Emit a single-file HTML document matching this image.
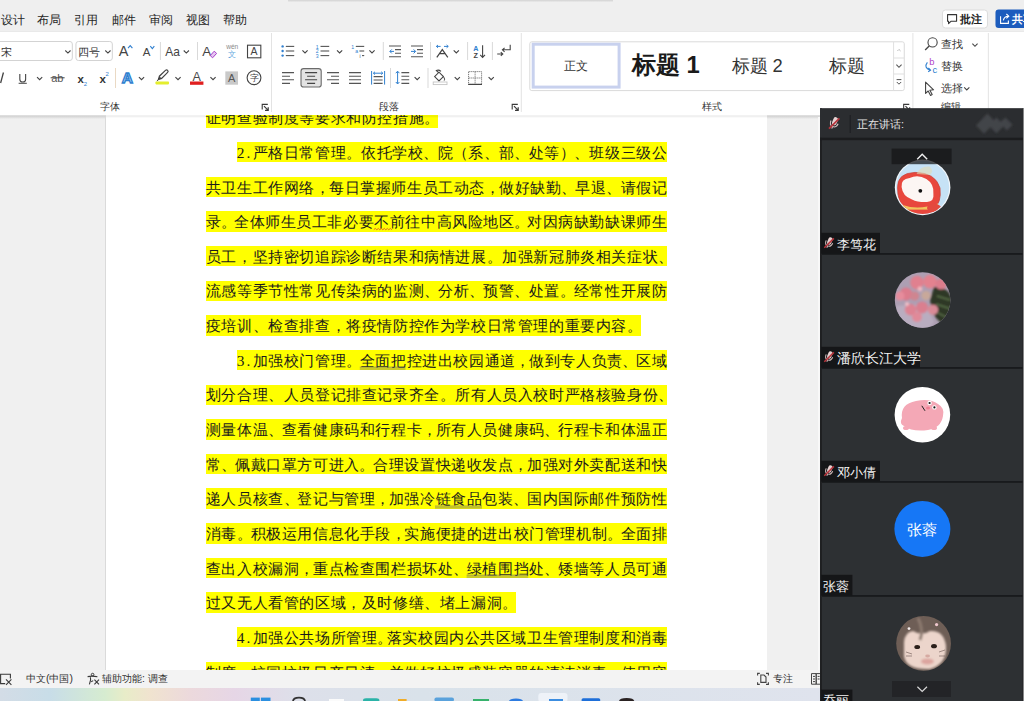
<!DOCTYPE html><html><head><meta charset="utf-8"><style>
*{margin:0;padding:0;box-sizing:border-box}
html,body{width:1024px;height:701px;overflow:hidden;background:#f0f0f0;position:relative;font-family:"Liberation Sans", sans-serif}
.a{position:absolute}
#menu{left:0;top:0;width:1024px;height:31.2px;background:#efefef}
#menu span{position:absolute;top:12.6px;font-size:16px;line-height:13px;color:#262626;white-space:nowrap}
.cjk #menu span{top:14.1px;font-size:12px}
#ribbon{left:0;top:31.2px;width:1024px;height:83.4px;background:#ffffff;border-top:1px solid #e9e9e9}
#rshadow{left:0;top:114.6px;width:1024px;height:4px;background:linear-gradient(#e2e2e2,#d6d6d6 40%,#f0f0f0)}
#page{left:105.5px;top:114.6px;width:661.5px;height:555.2px;background:#fff;overflow:hidden}
#pedge{left:105px;top:117px;width:1px;height:556px;background:#dadada}
.ln{position:absolute;height:20.4px;background:#ffff00;white-space:nowrap;font-family:"Liberation Sans", sans-serif;font-size:18px;line-height:20.4px;color:#1b1b1b;-webkit-text-stroke:0.48px #1b1b1b}
.ln i{display:inline-block;font-style:normal;text-align:center;height:20.4px;overflow:visible;vertical-align:top;position:relative;top:0.9px}
.ln i.h{font-family:"Liberation Serif", serif;font-size:15.4px;-webkit-text-stroke:0}
.ln i.p{font-size:8px;top:5px;text-align:left;text-indent:1.2px}
.cjk .ln{font-size:15.4px;-webkit-text-stroke:0}
.cjk .ln i.p{font-size:15.4px;top:0.9px;text-align:center;text-indent:0}
#status{left:0;top:669.8px;width:1024px;height:18px;background:#f3f3f3}
#status span{position:absolute;top:2.9px;font-size:13.9px;line-height:12px;color:#333;white-space:nowrap}
.cjk #status span{top:3.6px;font-size:10.4px}
svg text.z{font-size:calc(var(--f)*1.333)}
.cjk svg text.z{font-size:var(--f)}
#task{left:0;top:687.5px;width:1024px;height:14px;background:linear-gradient(90deg,#d3dce6 0px,#c8dde8 50px,#d6ecd0 105px,#e8ecc8 125px,#f0e3cf 150px,#ecd9dc 190px,#e6d6e6 235px,#dde0ea 300px,#d9e2ea 420px,#dfe3ed 820px)}
</style></head><body><script>(function(){var d=document,s=d.createElement("span");s.style.cssText="position:absolute;left:-9999px;top:0;font-size:100px;font-family:\"Liberation Sans\",sans-serif;white-space:nowrap";s.textContent="\u4e2d\u6587\u4e2d\u6587";d.body.appendChild(s);var w=s.getBoundingClientRect().width;d.body.removeChild(s);if(w>360){d.documentElement.className+=" cjk";}})();</script><div id="menu" class="a"><span style="left:0.7px">设计</span><span style="left:37.4px">布局</span><span style="left:74.4px">引用</span><span style="left:112.4px">邮件</span><span style="left:149.1px">审阅</span><span style="left:186.4px">视图</span><span style="left:223.3px">帮助</span></div><div class="a" style="left:288px;top:0;width:325px;height:2.4px;background:linear-gradient(#d8d8d8 45%,#efefef)"></div><div id="ribbon" class="a"></div><svg class="a" style="left:0;top:0" width="1024" height="114.6" viewBox="0 0 1024 114.6"><g stroke-linecap="butt"><rect x="-3" y="41.5" width="75.3" height="19" rx="2.5" fill="#fff" stroke="#d3d3d3"/><text x="0.5" y="55.6" font-size="11.5" fill="#333" font-weight="normal" text-anchor="start" font-family='"Liberation Sans", sans-serif' class="z" style="--f:11.50px">宋</text><path d="M65.3 50.5L67.9 53.1L70.5 50.5" stroke="#444" stroke-width="1.1" fill="none"/><rect x="75.9" y="41.5" width="36.4" height="19" rx="2.5" fill="#fff" stroke="#d3d3d3"/><text x="77.6" y="55.6" font-size="11.5" fill="#333" font-weight="normal" text-anchor="start" font-family='"Liberation Sans", sans-serif' class="z" style="--f:11.50px">四号</text><path d="M105.3 50.5L107.9 53.1L110.5 50.5" stroke="#444" stroke-width="1.1" fill="none"/><text x="118.8" y="56.0" font-size="14.5" fill="#444" font-weight="normal" text-anchor="start" font-family='"Liberation Sans", sans-serif' >A</text><path d="M128 48.2L130.2 45.6L132.4 48.2" stroke="#2f7fcf" stroke-width="1.1" fill="none"/><text x="142.8" y="56.2" font-size="11.5" fill="#444" font-weight="normal" text-anchor="start" font-family='"Liberation Sans", sans-serif' >A</text><path d="M150.3 46.2L152.3 48.6L154.3 46.2" stroke="#2f7fcf" stroke-width="1.1" fill="none"/><path d="M160.4 42.0V60.0" stroke="#d9d9d9" stroke-width="1"/><text x="165.3" y="56.2" font-size="12.0" fill="#444" font-weight="normal" text-anchor="start" font-family='"Liberation Sans", sans-serif' >Aa</text><path d="M183.7 50.5L186.3 53.1L188.9 50.5" stroke="#444" stroke-width="1.1" fill="none"/><path d="M197.5 42.0V60.0" stroke="#d9d9d9" stroke-width="1"/><text x="202.2" y="56.0" font-size="13.5" fill="#444" font-weight="normal" text-anchor="start" font-family='"Liberation Sans", sans-serif' >A</text><path d="M210.2 55.6L214.2 51.2L216.6 53.4L212.6 57.8Z" fill="#e6c6f2" stroke="#a63fc8" stroke-width="1"/><text x="232.2" y="49.4" font-size="6.6" fill="#8a8a8a" font-weight="normal" text-anchor="middle" font-family='"Liberation Sans", sans-serif' >wén</text><text x="232.4" y="57.2" font-size="8.0" fill="#62a8de" font-weight="normal" text-anchor="middle" font-family='"Liberation Sans", sans-serif' class="z" style="--f:8.00px">文</text><rect x="247.5" y="45.2" width="13.3" height="12.6" fill="none" stroke="#444" stroke-width="1.1"/><text x="254.1" y="55.4" font-size="10.5" fill="#444" font-weight="normal" text-anchor="middle" font-family='"Liberation Sans", sans-serif' >A</text><path d="M0.6 83L3.4 72.5" stroke="#444" stroke-width="1.3"/><path d="M19.8 74V79.2Q19.8 82 22.7 82Q25.6 82 25.6 79.2V74" stroke="#444" stroke-width="1.1" fill="none"/><path d="M18.6 83.3H26.8" stroke="#444" stroke-width="1"/><path d="M37.0 77.1L39.6 79.7L42.2 77.1" stroke="#444" stroke-width="1.1" fill="none"/><text x="51.2" y="81.6" font-size="11.0" fill="#555" font-weight="normal" text-anchor="start" font-family='"Liberation Sans", sans-serif' >ab</text><path d="M50.6 77.8H64.6" stroke="#444" stroke-width="1"/><text x="77.4" y="82.6" font-size="11.5" fill="#333" font-weight="bold" text-anchor="start" font-family='"Liberation Sans", sans-serif' >x</text><text x="83.8" y="85.6" font-size="6.0" fill="#2f7fcf" font-weight="normal" text-anchor="start" font-family='"Liberation Sans", sans-serif' >2</text><text x="99.4" y="82.6" font-size="11.5" fill="#333" font-weight="bold" text-anchor="start" font-family='"Liberation Sans", sans-serif' >x</text><text x="105.6" y="75.6" font-size="6.0" fill="#2f7fcf" font-weight="normal" text-anchor="start" font-family='"Liberation Sans", sans-serif' >2</text><path d="M115.5 68.0V88.0" stroke="#ead9c4" stroke-width="1"/><text x="127.3" y="83.2" font-size="15.5" fill="#c4e2fb" font-weight="bold" text-anchor="middle" font-family='"Liberation Sans", sans-serif' stroke="#2f7fcf" stroke-width="1.35">A</text><path d="M138.9 77.1L141.5 79.7L144.1 77.1" stroke="#444" stroke-width="1.1" fill="none"/><path d="M158.4 79.6L159.4 76.2L165.4 70.4Q166.6 69.4 167.6 70.4Q168.6 71.4 167.6 72.4L161.6 78.4Z" stroke="#444" stroke-width="1.2" fill="#fff"/><path d="M159.4 76.2L161.6 78.4L158.4 79.6Z" fill="#444"/><path d="M158.4 79.6L156.8 81" stroke="#444" stroke-width="1"/><rect x="155.4" y="81.6" width="13.6" height="2.8" rx="0.8" fill="#e4ee2e"/><path d="M175.4 77.1L178.0 79.7L180.6 77.1" stroke="#444" stroke-width="1.1" fill="none"/><text x="196.7" y="80.6" font-size="12.6" fill="#4a4a4a" font-weight="normal" text-anchor="middle" font-family='"Liberation Sans", sans-serif' >A</text><rect x="190" y="81.5" width="13.4" height="3.3" fill="#e01f1f"/><path d="M210.4 77.1L213.0 79.7L215.6 77.1" stroke="#444" stroke-width="1.1" fill="none"/><rect x="225.3" y="71.4" width="12.7" height="13.3" fill="#c9c9c9"/><text x="231.7" y="82.4" font-size="11.0" fill="#555" font-weight="normal" text-anchor="middle" font-family='"Liberation Sans", sans-serif' >A</text><circle cx="254" cy="77.7" r="6.9" fill="none" stroke="#444" stroke-width="1.1"/><text x="254.0" y="81.2" font-size="9.0" fill="#444" font-weight="normal" text-anchor="middle" font-family='"Liberation Sans", sans-serif' class="z" style="--f:9.00px">字</text><text x="99.6" y="110.4" font-size="9.8" fill="#333" font-weight="normal" text-anchor="start" font-family='"Liberation Sans", sans-serif' class="z" style="--f:9.80px">字体</text><path d="M262.2 109.6V104.4H267.8" fill="none" stroke="#3a3a3a" stroke-width="1.1"/><path d="M264.0 106.2L268.2 110.4M268.2 107.2V110.4H265.0" fill="none" stroke="#3a3a3a" stroke-width="1.2"/><path d="M271.5 33.0V112.0" stroke="#e3e3e3" stroke-width="1"/><circle cx="282.6" cy="46.4" r="1.2" fill="#2f7fcf"/><path d="M285.8 46.4H294.2" stroke="#555" stroke-width="1.1"/><circle cx="282.6" cy="51.0" r="1.2" fill="#2f7fcf"/><path d="M285.8 51.0H294.2" stroke="#555" stroke-width="1.1"/><circle cx="282.6" cy="55.6" r="1.2" fill="#2f7fcf"/><path d="M285.8 55.6H294.2" stroke="#555" stroke-width="1.1"/><path d="M302.4 50.3L305.0 52.9L307.6 50.3" stroke="#444" stroke-width="1.1" fill="none"/><text x="317.3" y="48.6" font-size="5.2" fill="#2f7fcf" font-weight="normal" text-anchor="middle" font-family='"Liberation Sans", sans-serif' >1</text><path d="M320.5 46.4H329.2" stroke="#555" stroke-width="1.1"/><text x="317.3" y="53.2" font-size="5.2" fill="#2f7fcf" font-weight="normal" text-anchor="middle" font-family='"Liberation Sans", sans-serif' >2</text><path d="M320.5 51.0H329.2" stroke="#555" stroke-width="1.1"/><text x="317.3" y="57.8" font-size="5.2" fill="#2f7fcf" font-weight="normal" text-anchor="middle" font-family='"Liberation Sans", sans-serif' >3</text><path d="M320.5 55.6H329.2" stroke="#555" stroke-width="1.1"/><path d="M337.0 50.3L339.6 52.9L342.2 50.3" stroke="#444" stroke-width="1.1" fill="none"/><text x="352.8" y="48.6" font-size="5.2" fill="#2f7fcf" font-weight="normal" text-anchor="middle" font-family='"Liberation Sans", sans-serif' >1</text><path d="M355.8 46.4H364.2" stroke="#555" stroke-width="1.1"/><text x="356.6" y="53.2" font-size="5.2" fill="#2f7fcf" font-weight="normal" text-anchor="middle" font-family='"Liberation Sans", sans-serif' >a</text><path d="M359.4 51H364.2" stroke="#555" stroke-width="1.1"/><text x="360.2" y="57.8" font-size="5.2" fill="#555" font-weight="normal" text-anchor="middle" font-family='"Liberation Sans", sans-serif' >i</text><path d="M362 55.6H364.2" stroke="#555" stroke-width="1.1"/><path d="M369.4 50.3L372.0 52.9L374.6 50.3" stroke="#444" stroke-width="1.1" fill="none"/><path d="M383.3 42.0V60.0" stroke="#d9d9d9" stroke-width="1"/><path d="M389 46H401M395 49.6H401M395 53.2H401M389 56.8H401" stroke="#555" stroke-width="1.1"/><path d="M390 51.4H394M391.8 49.4L389.8 51.4L391.8 53.4" stroke="#2f7fcf" stroke-width="1" fill="none"/><path d="M411 46H423M417 49.6H423M417 53.2H423M411 56.8H423" stroke="#555" stroke-width="1.1"/><path d="M411 51.4H415.5M413.6 49.4L415.6 51.4L413.6 53.4" stroke="#2f7fcf" stroke-width="1" fill="none"/><path d="M430.5 42.0V60.0" stroke="#d9d9d9" stroke-width="1"/><path d="M436.8 57.4L442.3 49.6L447.8 57.4M439.6 53.6H445" stroke="#444" stroke-width="1.2" fill="none"/><path d="M436.4 46.4H440.6M438 45L436.4 46.4L438 47.8M444 46.4H448.2M446.6 45L448.2 46.4L446.6 47.8" stroke="#2f7fcf" stroke-width="1" fill="none"/><path d="M453.7 50.3L456.3 52.9L458.9 50.3" stroke="#444" stroke-width="1.1" fill="none"/><path d="M467.6 42.0V60.0" stroke="#d9d9d9" stroke-width="1"/><text x="475.8" y="51.2" font-size="7.2" fill="#2f7fcf" font-weight="bold" text-anchor="middle" font-family='"Liberation Sans", sans-serif' >A</text><text x="475.8" y="58.0" font-size="7.2" fill="#444" font-weight="bold" text-anchor="middle" font-family='"Liberation Sans", sans-serif' >Z</text><path d="M482.6 45.2V57.4M480.2 54.8L482.6 57.4L485 54.8" stroke="#444" stroke-width="1.1" fill="none"/><path d="M492.4 42.0V60.0" stroke="#d9d9d9" stroke-width="1"/><path d="M510.2 44.8V49.8H502.6M504.6 47.8L502.4 49.8L504.6 51.8" stroke="#444" stroke-width="1.1" fill="none"/><path d="M497.2 54H502.6M500.8 52.2L502.8 54L500.8 55.8" stroke="#444" stroke-width="1.1" fill="none"/><path d="M282 72.6H294M282 76.2H290M282 79.8H294M282 83.4H290" stroke="#555" stroke-width="1.1"/><rect x="301" y="68.6" width="20.2" height="18.4" rx="2.6" fill="#e3e3e3" stroke="#6b6b6b" stroke-width="1.1"/><path d="M305.1 72.6H317.1M307.1 76.2H315.1M305.1 79.8H317.1M307.1 83.4H315.1" stroke="#444" stroke-width="1.1"/><path d="M327 72.6H339M331 76.2H339M327 79.8H339M331 83.4H339" stroke="#555" stroke-width="1.1"/><path d="M349 72.6H361M349 76.2H361M349 79.8H361M349 83.4H361" stroke="#555" stroke-width="1.1"/><path d="M371.6 71V84.6M384.6 71V84.6M373.4 73.2H382.8M375 71.8L373.4 73.2L375 74.6M381.2 71.8L382.8 73.2L381.2 74.6" stroke="#2f7fcf" stroke-width="1" fill="none"/><path d="M373.6 76.6H382.6M373.6 80H382.6M373.6 83.4H382.6" stroke="#555" stroke-width="1.1"/><path d="M390.5 68.0V88.0" stroke="#d9d9d9" stroke-width="1"/><path d="M397.6 71.4V83.8M395.8 73.2L397.6 71.2L399.4 73.2M395.8 82L397.6 84L399.4 82" stroke="#2f7fcf" stroke-width="1" fill="none"/><path d="M401.4 72.6H409.2M401.4 76.2H409.2M401.4 79.8H409.2M401.4 83.4H409.2" stroke="#555" stroke-width="1.1"/><path d="M414.6 77.1L417.2 79.7L419.8 77.1" stroke="#444" stroke-width="1.1" fill="none"/><path d="M428.0 68.0V88.0" stroke="#d9d9d9" stroke-width="1"/><path d="M434.6 76.6L439 72.2L443.4 76.6L439 81Z M438.6 72.6L436.4 70.6Q438.6 69.4 441 71.4" stroke="#444" stroke-width="1.1" fill="none"/><path d="M443.6 76.8Q445.4 79.6 444.2 80.6" stroke="#444" stroke-width="1" fill="none"/><rect x="433.2" y="82" width="13.8" height="2.6" fill="#fff" stroke="#c4c4c4" stroke-width="0.9"/><path d="M454.7 77.1L457.3 79.7L459.9 77.1" stroke="#444" stroke-width="1.1" fill="none"/><path d="M468.6 71.6H481.6V84.4H468.6Z M475.1 71.6V84.4M468.6 78H481.6" stroke="#777" stroke-width="1" fill="none" stroke-dasharray="1.2 0.8"/><path d="M468.2 84.4H482" stroke="#444" stroke-width="1.2"/><path d="M488.6 77.1L491.2 79.7L493.8 77.1" stroke="#444" stroke-width="1.1" fill="none"/><text x="379.3" y="110.4" font-size="9.8" fill="#333" font-weight="normal" text-anchor="start" font-family='"Liberation Sans", sans-serif' class="z" style="--f:9.80px">段落</text><path d="M512.2 109.6V104.4H517.8" fill="none" stroke="#3a3a3a" stroke-width="1.1"/><path d="M514.0 106.2L518.2 110.4M518.2 107.2V110.4H515.0" fill="none" stroke="#3a3a3a" stroke-width="1.2"/><path d="M521.3 33.0V112.0" stroke="#e3e3e3" stroke-width="1"/><rect x="529.8" y="41.8" width="374.5" height="48.8" rx="2" fill="#fff" stroke="#dadada"/><rect x="533.2" y="44.2" width="85.9" height="42.9" fill="#fff" stroke="#c8d1ee" stroke-width="3"/><text x="576.0" y="70.4" font-size="12.0" fill="#333" font-weight="normal" text-anchor="middle" font-family='"Liberation Sans", sans-serif' class="z" style="--f:12.00px">正文</text><text x="631.6" y="73.2" font-size="23.8" fill="#1a1a1a" font-weight="bold" text-anchor="start" font-family='"Liberation Sans", sans-serif' class="z" style="--f:23.80px">标题</text><text x="686.6" y="73.2" font-size="23.8" fill="#1a1a1a" font-weight="bold" text-anchor="start" font-family='"Liberation Sans", sans-serif' >1</text><text x="731.8" y="72.4" font-size="18.4" fill="#333" font-weight="normal" text-anchor="start" font-family='"Liberation Sans", sans-serif' class="z" style="--f:18.40px">标题</text><text x="772.6" y="72.4" font-size="18.4" fill="#333" font-weight="normal" text-anchor="start" font-family='"Liberation Sans", sans-serif' >2</text><text x="828.8" y="72.4" font-size="17.8" fill="#333" font-weight="normal" text-anchor="start" font-family='"Liberation Sans", sans-serif' class="z" style="--f:17.80px">标题</text><path d="M893.6 42V90.4M893.6 58H904.2M893.6 74H904.2" stroke="#e0e0e0" stroke-width="1"/><path d="M897.4 51L899 49.4L900.6 51" stroke="#bbb" stroke-width="1" fill="none"/><path d="M896.4 64.7L899.0 67.3L901.6 64.7" stroke="#555" stroke-width="1.1" fill="none"/><path d="M896.6 79.6H901.4M896.8 82L899 84.2L901.2 82" stroke="#555" stroke-width="1" fill="none"/><text x="702.0" y="110.4" font-size="9.8" fill="#333" font-weight="normal" text-anchor="start" font-family='"Liberation Sans", sans-serif' class="z" style="--f:9.80px">样式</text><path d="M903.7 109.6V104.4H909.3" fill="none" stroke="#3a3a3a" stroke-width="1.1"/><path d="M905.5 106.2L909.7 110.4M909.7 107.2V110.4H906.5" fill="none" stroke="#3a3a3a" stroke-width="1.2"/><path d="M912.9 33.0V112.0" stroke="#e3e3e3" stroke-width="1"/><circle cx="932.6" cy="42.4" r="4.6" fill="none" stroke="#444" stroke-width="1.1"/><path d="M929.4 45.8L925.2 50" stroke="#444" stroke-width="1.3"/><text x="941.0" y="48.4" font-size="10.6" fill="#333" font-weight="normal" text-anchor="start" font-family='"Liberation Sans", sans-serif' class="z" style="--f:10.60px">查找</text><path d="M972.4 43.7L975.0 46.3L977.6 43.7" stroke="#444" stroke-width="1.1" fill="none"/><text x="929.2" y="65.4" font-size="9.4" fill="#b044c8" font-weight="normal" text-anchor="start" font-family='"Liberation Sans", sans-serif' >b</text><text x="932.6" y="73.4" font-size="9.4" fill="#2f7fcf" font-weight="normal" text-anchor="start" font-family='"Liberation Sans", sans-serif' >c</text><path d="M927.4 62.4Q923.4 67.6 930.2 70.2M928.4 68L930.6 70.2L928.2 71.8" stroke="#2f7fcf" stroke-width="1.1" fill="none"/><text x="941.0" y="70.4" font-size="10.6" fill="#333" font-weight="normal" text-anchor="start" font-family='"Liberation Sans", sans-serif' class="z" style="--f:10.60px">替换</text><path d="M925.6 82.2V93.4L928.2 91L930.6 95.4L932.2 94.6L929.9 90.2L933.6 89.8Z" fill="none" stroke="#444" stroke-width="1.1" stroke-linejoin="round"/><text x="941.0" y="92.4" font-size="10.6" fill="#333" font-weight="normal" text-anchor="start" font-family='"Liberation Sans", sans-serif' class="z" style="--f:10.60px">选择</text><path d="M964.2 87.3L966.8 89.9L969.4 87.3" stroke="#444" stroke-width="1.1" fill="none"/><text x="941.0" y="109.8" font-size="10.2" fill="#333" font-weight="normal" text-anchor="start" font-family='"Liberation Sans", sans-serif' class="z" style="--f:10.20px">编辑</text><path d="M988.4 33.0V112.0" stroke="#e3e3e3" stroke-width="1"/><rect x="942.5" y="10" width="45" height="18" rx="3" fill="#fff" stroke="#dcdcdc"/><path d="M947.6 14.6H956.6V21.2H951.2L948.6 23.6V21.2H947.6Z" fill="none" stroke="#333" stroke-width="1.1" stroke-linejoin="round"/><text x="960.0" y="23.2" font-size="11.2" fill="#222" font-weight="bold" text-anchor="start" font-family='"Liberation Sans", sans-serif' class="z" style="--f:11.20px">批注</text><rect x="995.5" y="9.6" width="40" height="18.4" rx="3.2" fill="#1c5cbd"/><path d="M1000.6 16.2V23.4H1008.4V20.6M1003.4 20.4Q1004 16.4 1008.4 16.2M1006.4 14L1008.8 16.2L1006.4 18.4" fill="none" stroke="#fff" stroke-width="1.1"/><text x="1011.8" y="23.2" font-size="11.2" fill="#fff" font-weight="bold" text-anchor="start" font-family='"Liberation Sans", sans-serif' class="z" style="--f:11.20px">共享</text></g></svg><div id="rshadow" class="a"></div><div id="page" class="a"><div class="ln" style="left:100.10px;top:-7.25px;width:232.90px"><i style="width:15.600px">证</i><i style="width:15.600px">明</i><i style="width:15.600px">查</i><i style="width:15.600px">验</i><i style="width:15.600px">制</i><i style="width:15.600px">度</i><i style="width:15.600px">等</i><i style="width:15.600px">要</i><i style="width:15.600px">求</i><i style="width:15.600px">和</i><i style="width:15.600px">防</i><i style="width:15.600px">控</i><i style="width:15.600px">措</i><i style="width:15.600px">施</i><i class="p" style="width:14.500px">。</i></div><div class="ln" style="left:131.30px;top:27.40px;width:430.50px"><i class="h" style="width:7.800px">2</i><i class="h" style="width:7.800px">.</i><i style="width:15.600px">严</i><i style="width:15.600px">格</i><i style="width:15.600px">日</i><i style="width:15.600px">常</i><i style="width:15.600px">管</i><i style="width:15.600px">理</i><i class="p" style="width:14.700px">。</i><i style="width:15.600px">依</i><i style="width:15.600px">托</i><i style="width:15.600px">学</i><i style="width:15.600px">校</i><i class="p" style="width:14.700px">、</i><i style="width:15.600px">院</i><i class="p" style="width:14.700px">（</i><i style="width:15.600px">系</i><i class="p" style="width:14.700px">、</i><i style="width:15.600px">部</i><i class="p" style="width:14.700px">、</i><i style="width:15.600px">处</i><i style="width:15.600px">等</i><i class="p" style="width:14.700px">）</i><i class="p" style="width:14.700px">、</i><i style="width:15.600px">班</i><i style="width:15.600px">级</i><i style="width:15.600px">三</i><i style="width:15.600px">级</i><i style="width:15.600px">公</i></div><div class="ln" style="left:100.10px;top:62.05px;width:461.70px"><i style="width:15.600px">共</i><i style="width:15.600px">卫</i><i style="width:15.600px">生</i><i style="width:15.600px">工</i><i style="width:15.600px">作</i><i style="width:15.600px">网</i><i style="width:15.600px">络</i><i class="p" style="width:14.025px">，</i><i style="width:15.600px">每</i><i style="width:15.600px">日</i><i style="width:15.600px">掌</i><i style="width:15.600px">握</i><i style="width:15.600px">师</i><i style="width:15.600px">生</i><i style="width:15.600px">员</i><i style="width:15.600px">工</i><i style="width:15.600px">动</i><i style="width:15.600px">态</i><i class="p" style="width:14.025px">，</i><i style="width:15.600px">做</i><i style="width:15.600px">好</i><i style="width:15.600px">缺</i><i style="width:15.600px">勤</i><i class="p" style="width:14.025px">、</i><i style="width:15.600px">早</i><i style="width:15.600px">退</i><i class="p" style="width:14.025px">、</i><i style="width:15.600px">请</i><i style="width:15.600px">假</i><i style="width:15.600px">记</i></div><div class="ln" style="left:100.10px;top:96.70px;width:461.70px"><i style="width:15.600px">录</i><i class="p" style="width:12.450px">。</i><i style="width:15.600px">全</i><i style="width:15.600px">体</i><i style="width:15.600px">师</i><i style="width:15.600px">生</i><i style="width:15.600px">员</i><i style="width:15.600px">工</i><i style="width:15.600px">非</i><i style="width:15.600px">必</i><i style="width:15.600px">要</i><i style="width:15.600px">不</i><i style="width:15.600px">前</i><i style="width:15.600px">往</i><i style="width:15.600px">中</i><i style="width:15.600px">高</i><i style="width:15.600px">风</i><i style="width:15.600px">险</i><i style="width:15.600px">地</i><i style="width:15.600px">区</i><i class="p" style="width:12.450px">。</i><i style="width:15.600px">对</i><i style="width:15.600px">因</i><i style="width:15.600px">病</i><i style="width:15.600px">缺</i><i style="width:15.600px">勤</i><i style="width:15.600px">缺</i><i style="width:15.600px">课</i><i style="width:15.600px">师</i><i style="width:15.600px">生</i></div><div class="ln" style="left:100.10px;top:131.35px;width:461.70px"><i style="width:15.600px">员</i><i style="width:15.600px">工</i><i class="p" style="width:15.600px">，</i><i style="width:15.600px">坚</i><i style="width:15.600px">持</i><i style="width:15.600px">密</i><i style="width:15.600px">切</i><i style="width:15.600px">追</i><i style="width:15.600px">踪</i><i style="width:15.600px">诊</i><i style="width:15.600px">断</i><i style="width:15.600px">结</i><i style="width:15.600px">果</i><i style="width:15.600px">和</i><i style="width:15.600px">病</i><i style="width:15.600px">情</i><i style="width:15.600px">进</i><i style="width:15.600px">展</i><i class="p" style="width:15.600px">。</i><i style="width:15.600px">加</i><i style="width:15.600px">强</i><i style="width:15.600px">新</i><i style="width:15.600px">冠</i><i style="width:15.600px">肺</i><i style="width:15.600px">炎</i><i style="width:15.600px">相</i><i style="width:15.600px">关</i><i style="width:15.600px">症</i><i style="width:15.600px">状</i><i class="p" style="width:9.300px">、</i></div><div class="ln" style="left:100.10px;top:166.00px;width:461.70px"><i style="width:15.600px">流</i><i style="width:15.600px">感</i><i style="width:15.600px">等</i><i style="width:15.600px">季</i><i style="width:15.600px">节</i><i style="width:15.600px">性</i><i style="width:15.600px">常</i><i style="width:15.600px">见</i><i style="width:15.600px">传</i><i style="width:15.600px">染</i><i style="width:15.600px">病</i><i style="width:15.600px">的</i><i style="width:15.600px">监</i><i style="width:15.600px">测</i><i class="p" style="width:14.025px">、</i><i style="width:15.600px">分</i><i style="width:15.600px">析</i><i class="p" style="width:14.025px">、</i><i style="width:15.600px">预</i><i style="width:15.600px">警</i><i class="p" style="width:14.025px">、</i><i style="width:15.600px">处</i><i style="width:15.600px">置</i><i class="p" style="width:14.025px">。</i><i style="width:15.600px">经</i><i style="width:15.600px">常</i><i style="width:15.600px">性</i><i style="width:15.600px">开</i><i style="width:15.600px">展</i><i style="width:15.600px">防</i></div><div class="ln" style="left:100.10px;top:200.65px;width:435.70px"><i style="width:15.600px">疫</i><i style="width:15.600px">培</i><i style="width:15.600px">训</i><i class="p" style="width:15.600px">、</i><i style="width:15.600px">检</i><i style="width:15.600px">查</i><i style="width:15.600px">排</i><i style="width:15.600px">查</i><i class="p" style="width:15.600px">，</i><i style="width:15.600px">将</i><i style="width:15.600px">疫</i><i style="width:15.600px">情</i><i style="width:15.600px">防</i><i style="width:15.600px">控</i><i style="width:15.600px">作</i><i style="width:15.600px">为</i><i style="width:15.600px">学</i><i style="width:15.600px">校</i><i style="width:15.600px">日</i><i style="width:15.600px">常</i><i style="width:15.600px">管</i><i style="width:15.600px">理</i><i style="width:15.600px">的</i><i style="width:15.600px">重</i><i style="width:15.600px">要</i><i style="width:15.600px">内</i><i style="width:15.600px">容</i><i class="p" style="width:14.500px">。</i></div><div class="ln" style="left:131.30px;top:235.30px;width:430.50px"><i class="h" style="width:7.800px">3</i><i class="h" style="width:7.800px">.</i><i style="width:15.600px">加</i><i style="width:15.600px">强</i><i style="width:15.600px">校</i><i style="width:15.600px">门</i><i style="width:15.600px">管</i><i style="width:15.600px">理</i><i class="p" style="width:13.500px">。</i><i style="width:15.600px">全</i><i style="width:15.600px">面</i><i style="width:15.600px">把</i><i style="width:15.600px">控</i><i style="width:15.600px">进</i><i style="width:15.600px">出</i><i style="width:15.600px">校</i><i style="width:15.600px">园</i><i style="width:15.600px">通</i><i style="width:15.600px">道</i><i class="p" style="width:13.500px">，</i><i style="width:15.600px">做</i><i style="width:15.600px">到</i><i style="width:15.600px">专</i><i style="width:15.600px">人</i><i style="width:15.600px">负</i><i style="width:15.600px">责</i><i class="p" style="width:13.500px">、</i><i style="width:15.600px">区</i><i style="width:15.600px">域</i></div><div class="ln" style="left:100.10px;top:269.95px;width:461.70px"><i style="width:15.600px">划</i><i style="width:15.600px">分</i><i style="width:15.600px">合</i><i style="width:15.600px">理</i><i class="p" style="width:15.600px">、</i><i style="width:15.600px">人</i><i style="width:15.600px">员</i><i style="width:15.600px">登</i><i style="width:15.600px">记</i><i style="width:15.600px">排</i><i style="width:15.600px">查</i><i style="width:15.600px">记</i><i style="width:15.600px">录</i><i style="width:15.600px">齐</i><i style="width:15.600px">全</i><i class="p" style="width:15.600px">。</i><i style="width:15.600px">所</i><i style="width:15.600px">有</i><i style="width:15.600px">人</i><i style="width:15.600px">员</i><i style="width:15.600px">入</i><i style="width:15.600px">校</i><i style="width:15.600px">时</i><i style="width:15.600px">严</i><i style="width:15.600px">格</i><i style="width:15.600px">核</i><i style="width:15.600px">验</i><i style="width:15.600px">身</i><i style="width:15.600px">份</i><i class="p" style="width:9.300px">、</i></div><div class="ln" style="left:100.10px;top:304.60px;width:461.70px"><i style="width:15.600px">测</i><i style="width:15.600px">量</i><i style="width:15.600px">体</i><i style="width:15.600px">温</i><i class="p" style="width:13.500px">、</i><i style="width:15.600px">查</i><i style="width:15.600px">看</i><i style="width:15.600px">健</i><i style="width:15.600px">康</i><i style="width:15.600px">码</i><i style="width:15.600px">和</i><i style="width:15.600px">行</i><i style="width:15.600px">程</i><i style="width:15.600px">卡</i><i class="p" style="width:13.500px">，</i><i style="width:15.600px">所</i><i style="width:15.600px">有</i><i style="width:15.600px">人</i><i style="width:15.600px">员</i><i style="width:15.600px">健</i><i style="width:15.600px">康</i><i style="width:15.600px">码</i><i class="p" style="width:13.500px">、</i><i style="width:15.600px">行</i><i style="width:15.600px">程</i><i style="width:15.600px">卡</i><i style="width:15.600px">和</i><i style="width:15.600px">体</i><i style="width:15.600px">温</i><i style="width:15.600px">正</i></div><div class="ln" style="left:100.10px;top:339.25px;width:461.70px"><i style="width:15.600px">常</i><i class="p" style="width:13.500px">、</i><i style="width:15.600px">佩</i><i style="width:15.600px">戴</i><i style="width:15.600px">口</i><i style="width:15.600px">罩</i><i style="width:15.600px">方</i><i style="width:15.600px">可</i><i style="width:15.600px">进</i><i style="width:15.600px">入</i><i class="p" style="width:13.500px">。</i><i style="width:15.600px">合</i><i style="width:15.600px">理</i><i style="width:15.600px">设</i><i style="width:15.600px">置</i><i style="width:15.600px">快</i><i style="width:15.600px">递</i><i style="width:15.600px">收</i><i style="width:15.600px">发</i><i style="width:15.600px">点</i><i class="p" style="width:13.500px">，</i><i style="width:15.600px">加</i><i style="width:15.600px">强</i><i style="width:15.600px">对</i><i style="width:15.600px">外</i><i style="width:15.600px">卖</i><i style="width:15.600px">配</i><i style="width:15.600px">送</i><i style="width:15.600px">和</i><i style="width:15.600px">快</i></div><div class="ln" style="left:100.10px;top:373.90px;width:461.70px"><i style="width:15.600px">递</i><i style="width:15.600px">人</i><i style="width:15.600px">员</i><i style="width:15.600px">核</i><i style="width:15.600px">查</i><i class="p" style="width:13.500px">、</i><i style="width:15.600px">登</i><i style="width:15.600px">记</i><i style="width:15.600px">与</i><i style="width:15.600px">管</i><i style="width:15.600px">理</i><i class="p" style="width:13.500px">，</i><i style="width:15.600px">加</i><i style="width:15.600px">强</i><i style="width:15.600px">冷</i><i style="width:15.600px">链</i><i style="width:15.600px">食</i><i style="width:15.600px">品</i><i style="width:15.600px">包</i><i style="width:15.600px">装</i><i class="p" style="width:13.500px">、</i><i style="width:15.600px">国</i><i style="width:15.600px">内</i><i style="width:15.600px">国</i><i style="width:15.600px">际</i><i style="width:15.600px">邮</i><i style="width:15.600px">件</i><i style="width:15.600px">预</i><i style="width:15.600px">防</i><i style="width:15.600px">性</i></div><div class="ln" style="left:100.10px;top:408.55px;width:461.70px"><i style="width:15.600px">消</i><i style="width:15.600px">毒</i><i class="p" style="width:13.500px">。</i><i style="width:15.600px">积</i><i style="width:15.600px">极</i><i style="width:15.600px">运</i><i style="width:15.600px">用</i><i style="width:15.600px">信</i><i style="width:15.600px">息</i><i style="width:15.600px">化</i><i style="width:15.600px">手</i><i style="width:15.600px">段</i><i class="p" style="width:13.500px">，</i><i style="width:15.600px">实</i><i style="width:15.600px">施</i><i style="width:15.600px">便</i><i style="width:15.600px">捷</i><i style="width:15.600px">的</i><i style="width:15.600px">进</i><i style="width:15.600px">出</i><i style="width:15.600px">校</i><i style="width:15.600px">门</i><i style="width:15.600px">管</i><i style="width:15.600px">理</i><i style="width:15.600px">机</i><i style="width:15.600px">制</i><i class="p" style="width:13.500px">。</i><i style="width:15.600px">全</i><i style="width:15.600px">面</i><i style="width:15.600px">排</i></div><div class="ln" style="left:100.10px;top:443.20px;width:461.70px"><i style="width:15.600px">查</i><i style="width:15.600px">出</i><i style="width:15.600px">入</i><i style="width:15.600px">校</i><i style="width:15.600px">漏</i><i style="width:15.600px">洞</i><i class="p" style="width:13.500px">，</i><i style="width:15.600px">重</i><i style="width:15.600px">点</i><i style="width:15.600px">检</i><i style="width:15.600px">查</i><i style="width:15.600px">围</i><i style="width:15.600px">栏</i><i style="width:15.600px">损</i><i style="width:15.600px">坏</i><i style="width:15.600px">处</i><i class="p" style="width:13.500px">、</i><i style="width:15.600px">绿</i><i style="width:15.600px">植</i><i style="width:15.600px">围</i><i style="width:15.600px">挡</i><i style="width:15.600px">处</i><i class="p" style="width:13.500px">、</i><i style="width:15.600px">矮</i><i style="width:15.600px">墙</i><i style="width:15.600px">等</i><i style="width:15.600px">人</i><i style="width:15.600px">员</i><i style="width:15.600px">可</i><i style="width:15.600px">通</i></div><div class="ln" style="left:100.10px;top:477.85px;width:310.90px"><i style="width:15.600px">过</i><i style="width:15.600px">又</i><i style="width:15.600px">无</i><i style="width:15.600px">人</i><i style="width:15.600px">看</i><i style="width:15.600px">管</i><i style="width:15.600px">的</i><i style="width:15.600px">区</i><i style="width:15.600px">域</i><i class="p" style="width:15.600px">，</i><i style="width:15.600px">及</i><i style="width:15.600px">时</i><i style="width:15.600px">修</i><i style="width:15.600px">缮</i><i class="p" style="width:15.600px">、</i><i style="width:15.600px">堵</i><i style="width:15.600px">上</i><i style="width:15.600px">漏</i><i style="width:15.600px">洞</i><i class="p" style="width:14.500px">。</i></div><div class="ln" style="left:131.30px;top:512.50px;width:430.50px"><i class="h" style="width:7.800px">4</i><i class="h" style="width:7.800px">.</i><i style="width:15.600px">加</i><i style="width:15.600px">强</i><i style="width:15.600px">公</i><i style="width:15.600px">共</i><i style="width:15.600px">场</i><i style="width:15.600px">所</i><i style="width:15.600px">管</i><i style="width:15.600px">理</i><i class="p" style="width:9.300px">。</i><i style="width:15.600px">落</i><i style="width:15.600px">实</i><i style="width:15.600px">校</i><i style="width:15.600px">园</i><i style="width:15.600px">内</i><i style="width:15.600px">公</i><i style="width:15.600px">共</i><i style="width:15.600px">区</i><i style="width:15.600px">域</i><i style="width:15.600px">卫</i><i style="width:15.600px">生</i><i style="width:15.600px">管</i><i style="width:15.600px">理</i><i style="width:15.600px">制</i><i style="width:15.600px">度</i><i style="width:15.600px">和</i><i style="width:15.600px">消</i><i style="width:15.600px">毒</i></div><div class="ln" style="left:100.10px;top:547.15px;width:461.70px"><i style="width:15.600px">制</i><i style="width:15.600px">度</i><i class="p" style="width:13.500px">。</i><i style="width:15.600px">校</i><i style="width:15.600px">园</i><i style="width:15.600px">垃</i><i style="width:15.600px">圾</i><i style="width:15.600px">日</i><i style="width:15.600px">产</i><i style="width:15.600px">日</i><i style="width:15.600px">清</i><i class="p" style="width:13.500px">，</i><i style="width:15.600px">并</i><i style="width:15.600px">做</i><i style="width:15.600px">好</i><i style="width:15.600px">垃</i><i style="width:15.600px">圾</i><i style="width:15.600px">盛</i><i style="width:15.600px">装</i><i style="width:15.600px">容</i><i style="width:15.600px">器</i><i style="width:15.600px">的</i><i style="width:15.600px">清</i><i style="width:15.600px">洁</i><i style="width:15.600px">消</i><i style="width:15.600px">毒</i><i class="p" style="width:13.500px">，</i><i style="width:15.600px">使</i><i style="width:15.600px">用</i><i style="width:15.600px">容</i></div></div><div class="a" style="left:105.5px;top:114.6px;width:661.5px;height:3.6px;background:linear-gradient(rgba(0,0,0,0.04),rgba(0,0,0,0.07) 40%,rgba(0,0,0,0))"></div><div class="a" style="left:817.6px;top:117px;width:2.4px;height:553px;background:#f8f8f8"></div><div id="pedge" class="a"></div><svg class="a" style="left:0;top:0" width="1024" height="701" viewBox="0 0 1024 701"><path d="M373.8 229.6L375.3 228.4L376.8 229.8L378.3 228.4L379.8 229.8L381.3 228.4L382.8 229.8L384.3 228.4L385.8 229.8L387.3 228.4L388.8 229.8L390.3 228.4L391.8 229.8" stroke="#dc5a2a" stroke-width="0.9" fill="none"/><path d="M359.8 367.2H405.5M359.8 369.0H405.5" stroke="#6c6c6c" stroke-width="0.7" fill="none"/><path d="M435.0 506.1H482.0M435.0 507.9H482.0" stroke="#6c6c6c" stroke-width="0.7" fill="none"/><path d="M466.6 575.2H528.2M466.6 577.0H528.2" stroke="#6c6c6c" stroke-width="0.7" fill="none"/></svg><div id="status" class="a"><span style="left:26px">中文(中国)</span><span style="left:102px">辅助功能: 调查</span><span style="left:773px">专注</span></div><svg class="a" style="left:0;top:669px" width="820" height="19" viewBox="0 669 820 19"><path d="M5.2 683.6H0.6V674.2H10.4V678.6" fill="none" stroke="#3a3a3a" stroke-width="1.1"/><path d="M6 679.4L11.4 684.8M11.4 679.4L6 684.8" stroke="#3a3a3a" stroke-width="1.1"/><circle cx="92.6" cy="674.6" r="1.3" fill="none" stroke="#3a3a3a" stroke-width="1"/><path d="M87.6 676.6Q92.6 675.6 97.4 676.8M90.4 677.2L90.6 680L89.4 684.4M91.2 681.8L93.2 680.6" fill="none" stroke="#3a3a3a" stroke-width="1.1"/><path d="M94.4 679.6L99 684.4M99 679.6L94.4 684.4" stroke="#3a3a3a" stroke-width="1.1"/><path d="M757.6 675.4V673.4H759.8M766 673.4H768.4V675.4M768.4 682.2V684.4H766M759.8 684.4H757.6V682.2M760.8 675H764L766 677V682.4H760.8Z" fill="none" stroke="#444" stroke-width="1.1"/><path d="M811.5 673.6H816.2V684.2H811.5ZM816.2 673.6H821V684.2H816.2ZM813 676.4H815M813 679H815M813 681.6H815M817.6 676.4H819.6M817.6 679H819.6" fill="none" stroke="#444" stroke-width="1"/></svg><div id="task" class="a"></div><svg class="a" style="left:0;top:687px" width="820" height="14" viewBox="0 687 820 14"><rect x="538.3" y="693" width="29.2" height="9" rx="3" fill="#eef2f8"/><rect x="250.8" y="697.6" width="9" height="4" fill="#2b8fe0"/><rect x="260.9" y="697.6" width="9.6" height="4" fill="#2b8fe0"/><path d="M293 701.5Q293 697.6 299 697.6Q305 697.6 305 701.5" fill="none" stroke="#333" stroke-width="1.8"/><rect x="329" y="699" width="15" height="3" fill="#fbfbfb"/><rect x="363" y="698.2" width="16.4" height="4" rx="3" fill="#2bb3a8"/><rect x="398" y="699" width="8.6" height="3" fill="#f0ac28"/><rect x="434.4" y="697.6" width="19.6" height="4" rx="2" fill="#5aa2dc"/><rect x="473" y="699" width="16" height="3" fill="#37b26c"/><path d="M509 701.5Q509 698.4 516 698.4Q523 698.4 523 701.5Z" fill="#2d7be0"/><rect x="549" y="699" width="14" height="3" fill="#3c8de0"/><rect x="581.6" y="698.2" width="18.6" height="4" rx="1.5" fill="#1e6fd9"/><path d="M619 701.5Q619 698 626.6 698Q634.3 698 634.3 701.5Z" fill="#2a2222"/></svg><svg class="a" style="left:820px;top:108px" width="204" height="593" viewBox="820 108 204 593"><defs><clipPath id="c1"><circle cx="922.6" cy="187.4" r="26.6"/></clipPath><clipPath id="c2"><circle cx="922.6" cy="300" r="27.8"/></clipPath><clipPath id="c3"><circle cx="922.4" cy="414.7" r="27.8"/></clipPath><clipPath id="c5"><circle cx="923.6" cy="643.4" r="27.4"/></clipPath><filter id="bl" x="-20%" y="-20%" width="140%" height="140%"><feGaussianBlur stdDeviation="1.3"/></filter><filter id="bl2" x="-20%" y="-20%" width="140%" height="140%"><feGaussianBlur stdDeviation="0.7"/></filter></defs><rect x="820" y="108.4" width="204" height="593" fill="#2d3033"/><rect x="820" y="108.4" width="2" height="593" fill="#1f2022"/><rect x="1022.6" y="108.4" width="0.8" height="593" fill="#1f2022"/><rect x="1023.4" y="108.4" width="0.6" height="593" fill="#c8c8c8"/><rect x="820" y="108.4" width="203" height="29.4" fill="#2b2d30"/><rect x="820" y="137.7" width="203" height="2.5" fill="#1b1c1e"/><g transform="translate(828.0 116.2) scale(1.00)"><g transform="rotate(24 6 7)"><rect x="3.8" y="0.6" width="4.6" height="8.4" rx="2.3" fill="#e6d2d2"/><path d="M2.2 5.8Q2.2 10.6 6.1 10.6Q10 10.6 10 5.8M6.1 10.6V12.8" stroke="#d8c2c2" stroke-width="1.1" fill="none"/></g><path d="M1 12.4L11.4 2.2" stroke="#b8343c" stroke-width="1.7"/></g><rect x="849.6" y="115" width="1.2" height="18" fill="#1f2023"/><text x="857" y="127.6" font-size="10.8" class="z" style="--f:10.8px" fill="#e4e4e4" font-family='"Liberation Sans", sans-serif'>正在讲话:</text><g fill="#434549" filter="url(#bl)"><path d="M976 125.4L987.4 113.6L995.4 122L984 133.8Z"/><path d="M988.6 125.4L996.4 117.6L1004.4 125.4L996.4 133.2Z"/><path d="M1000 122.6L1005.4 117.4L1012.6 124.8L1006.8 130.6Z"/></g><rect x="822" y="253.2" width="200.6" height="1.5" fill="#151618"/><rect x="822" y="367.2" width="200.6" height="1.5" fill="#151618"/><rect x="822" y="481.2" width="200.6" height="1.5" fill="#151618"/><rect x="822" y="595.2" width="200.6" height="1.5" fill="#151618"/><rect x="822" y="709.2" width="200.6" height="1.5" fill="#151618"/><circle cx="922.6" cy="187.4" r="27.8" fill="#f3f7fb"/><g clip-path="url(#c1)"><rect x="890" y="155" width="70" height="70" fill="#c6e2f6"/><path d="M897.6 188Q897 173 915 172.4Q935.6 172.6 940 188Q941.6 203 934 208L904 208Q897.6 201 897.6 188Z" fill="#e8473d" stroke="#c9443a" stroke-width="0.8"/><path d="M901.6 187Q900.6 179 909.6 178Q918 174 926.4 179Q934.4 184 933.4 194Q934.4 201.6 927 202Q918 202.4 912 199.4Q902.6 196.4 901.6 187Z" fill="#fcf6f3"/><circle cx="920.3" cy="190.8" r="1.9" fill="#111"/><path d="M901 204.6Q918 211 938 203.6L938 209Q918 216 901 210Z" fill="#f2c35c"/><rect x="900" y="209.6" width="40" height="8" fill="#e8473d"/><ellipse cx="934" cy="208" rx="7" ry="4.2" fill="#e34a3e"/><path d="M916.6 174Q920 165.6 929.6 166.6Q934.4 171 930 175Z" fill="#e2dcb4" opacity="0.6"/></g><rect x="891.6" y="148.6" width="60" height="15.6" fill="#151617" fill-opacity="0.74"/><path d="M917.2 159.2L922.2 154.2L927.2 159.2" stroke="#f0f0f0" stroke-width="1.4" fill="none"/><rect x="821" y="232.8" width="59" height="20.8" fill="#151618"/><g transform="translate(823.4 236.4) scale(0.92)"><g transform="rotate(24 6 7)"><rect x="3.8" y="0.6" width="4.6" height="8.4" rx="2.3" fill="#e6d2d2"/><path d="M2.2 5.8Q2.2 10.6 6.1 10.6Q10 10.6 10 5.8M6.1 10.6V12.8" stroke="#d8c2c2" stroke-width="1.1" fill="none"/></g><path d="M1 12.4L11.4 2.2" stroke="#b8343c" stroke-width="1.7"/></g><text x="837" y="248.6" font-size="13.3" class="z" style="--f:13.3px" fill="#f4f4f4" font-family='"Liberation Sans", sans-serif'>李笃花</text><g clip-path="url(#c2)"><rect x="893" y="270" width="62" height="62" fill="#ad9fb3"/><g filter="url(#bl)"><path d="M896 306Q898 328 920 330Q930 330 934 322L926 304Z" fill="#b9adc0"/><path d="M934 287Q952 286 953 306Q951 324 940 322Q932 316 930 300Z" fill="#2e3727"/><path d="M937 296L950 300M936 304L951 309M934 311L948 318" stroke="#6d8a58" stroke-width="1"/><circle cx="906" cy="294" r="6.4" fill="#dc7b8d"/><circle cx="917" cy="282.6" r="6.8" fill="#e0808f"/><circle cx="930" cy="281.6" r="6.8" fill="#e3828f"/><circle cx="941" cy="284" r="5.6" fill="#dc7d8c"/><circle cx="900" cy="296" r="4.6" fill="#e68c9c"/><circle cx="910.6" cy="309.6" r="5.8" fill="#dd8393"/><circle cx="922" cy="307.6" r="6" fill="#da7f8f"/><circle cx="933" cy="309.6" r="5.2" fill="#d98a96"/><circle cx="917" cy="317" r="5" fill="#e08a99"/><circle cx="926" cy="295.6" r="4.6" fill="#c8a89a"/><circle cx="914.6" cy="296" r="4.6" fill="#cf8590"/><circle cx="920" cy="289" r="2.4" fill="#f0b8c0"/><circle cx="907" cy="304" r="2" fill="#f2c0c8"/></g></g><rect x="821" y="346.8" width="99" height="20.8" fill="#151618"/><g transform="translate(823.4 350.4) scale(0.92)"><g transform="rotate(24 6 7)"><rect x="3.8" y="0.6" width="4.6" height="8.4" rx="2.3" fill="#e6d2d2"/><path d="M2.2 5.8Q2.2 10.6 6.1 10.6Q10 10.6 10 5.8M6.1 10.6V12.8" stroke="#d8c2c2" stroke-width="1.1" fill="none"/></g><path d="M1 12.4L11.4 2.2" stroke="#b8343c" stroke-width="1.7"/></g><text x="836.6" y="362.8" font-size="13.7" class="z" style="--f:13.7px" fill="#f4f4f4" font-family='"Liberation Sans", sans-serif'>潘欣长江大学</text><circle cx="922.4" cy="414.7" r="27.8" fill="#ffffff"/><g clip-path="url(#c3)"><path d="M902 418Q900 404 916 401Q930 398 938 404Q945 408 943 416Q941 428 928 430Q912 432 904 426Q899 424 902 418Z" fill="#f4a8b6"/><ellipse cx="906" cy="428" rx="3" ry="2" fill="#f4a8b6"/><ellipse cx="934" cy="428" rx="3" ry="2" fill="#f4a8b6"/><circle cx="929.6" cy="403" r="2.2" fill="#fff"/><circle cx="929.6" cy="403" r="1.1" fill="#111"/><circle cx="934.4" cy="407.4" r="2.2" fill="#fff"/><circle cx="934.4" cy="407.4" r="1.1" fill="#111"/><path d="M921.8 405.8L925 410.8" stroke="#222" stroke-width="1"/><ellipse cx="928" cy="408" rx="2" ry="1.6" fill="#ef7f93"/></g><rect x="821" y="460.8" width="59" height="20.8" fill="#151618"/><g transform="translate(823.4 464.4) scale(0.92)"><g transform="rotate(24 6 7)"><rect x="3.8" y="0.6" width="4.6" height="8.4" rx="2.3" fill="#e6d2d2"/><path d="M2.2 5.8Q2.2 10.6 6.1 10.6Q10 10.6 10 5.8M6.1 10.6V12.8" stroke="#d8c2c2" stroke-width="1.1" fill="none"/></g><path d="M1 12.4L11.4 2.2" stroke="#b8343c" stroke-width="1.7"/></g><text x="837" y="476.6" font-size="13.3" class="z" style="--f:13.3px" fill="#f4f4f4" font-family='"Liberation Sans", sans-serif'>邓小倩</text><circle cx="922.4" cy="528.9" r="28" fill="#1677f6"/><text x="922.4" y="534.6" font-size="15" class="z" style="--f:15px" fill="#ffffff" text-anchor="middle" font-family='"Liberation Sans", sans-serif'>张蓉</text><rect x="821" y="574.8" width="31.4" height="20.8" fill="#151618"/><text x="823" y="590.6" font-size="13.3" class="z" style="--f:13.3px" fill="#f4f4f4" font-family='"Liberation Sans", sans-serif'>张蓉</text><g clip-path="url(#c5)"><rect x="894" y="614" width="60" height="60" fill="#6e5e56"/><g filter="url(#bl)"><path d="M904 642Q905 632 913 631Q922 636 930 631Q944 630 946 646Q947 664 930 669Q906 670 904 656Z" fill="#ecd5cb"/><path d="M896 666Q922 680 952 664V678H896Z" fill="#f1e7da"/><path d="M918 618Q924 630 920 640" stroke="#8c7a70" stroke-width="3" fill="none"/><ellipse cx="927.4" cy="661.4" rx="6.4" ry="3" fill="#dca59f"/></g><ellipse cx="917.2" cy="647" rx="2.9" ry="2.1" fill="#2a1f1a"/><ellipse cx="934" cy="646.2" rx="2.9" ry="2.1" fill="#2a1f1a"/><ellipse cx="927.6" cy="656" rx="2.4" ry="1.4" fill="#d6aaa2"/><path d="M906 652L912 654M906 656L912 656M939 652L945 650M939 656L945 656" stroke="#6a5650" stroke-width="0.6"/><circle cx="909" cy="628.6" r="1.4" fill="#f6f0f0"/><circle cx="936.6" cy="624.6" r="1.6" fill="#f0c8ce"/></g><rect x="892" y="681" width="59" height="16" fill="#151617" fill-opacity="0.42"/><path d="M917.4 686.8L922.2 691.4L927 686.8" stroke="#d8d8d8" stroke-width="1.2" fill="none"/><rect x="821" y="689.6" width="31.4" height="12" fill="#151618"/><text x="823" y="705.4" font-size="13.3" class="z" style="--f:13.3px" fill="#f4f4f4" font-family='"Liberation Sans", sans-serif'>乔丽</text></svg></body></html>
